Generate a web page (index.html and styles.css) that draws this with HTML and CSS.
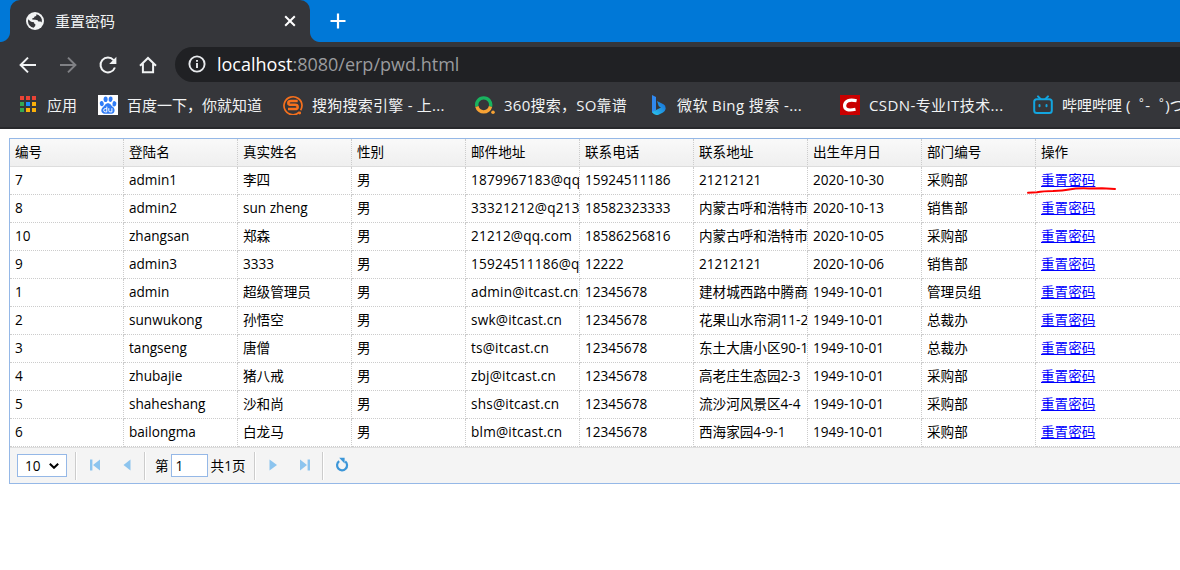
FILE: index.html
```html
<!DOCTYPE html>
<html lang="zh-CN">
<head>
	<meta charset="UTF-8">
	<title>重置密码</title>
	<link rel="stylesheet" href="styles.css">
</head>
<body>
	<div class="tabs">
		<div class="tab">
			<svg class="globe" viewBox="0 0 18 18"><circle cx="9" cy="9" r="9" fill="#f1f3f4"/><path d="M2.2 7.2 L4.4 9.2 Q5 10 6.2 10 L8 10.2 L8.2 11.6 L9.4 12.2 L9.2 14 L7.6 15.8 Q2.4 14.6 2 9.5Z M10.4 2.2 Q14.8 3.2 15.9 7.8 L15.7 10.6 L14.6 9.6 L12.4 9.6 L11.6 8.2 L9.4 7.8 L6.2 7.6 L6.4 6.2 L8 5.8 L8.6 4.4 L10.2 4Z" fill="#35363a"/></svg>
			<span class="tab_title">重置密码</span>
			<svg class="close" viewBox="0 0 12 12"><path d="M1.2 1.2L10.8 10.8M10.8 1.2L1.2 10.8"/></svg>
		</div>
		<svg class="add" viewBox="0 0 16 16"><path d="M8 .5V15.5M.5 8H15.5"/></svg>
	</div>
	<div class="toolbar">
		<svg class="nav" viewBox="0 0 20 20"><path d="M18 10H3M10 2.6L2.6 10L10 17.4"/></svg>
		<svg class="nav off" viewBox="0 0 20 20"><path d="M2 10H17M10 2.6L17.4 10L10 17.4"/></svg>
		<svg class="nav" viewBox="0 0 20 20"><path d="M16.9 12.5A7.4 7.4 0 1 1 15.6 5.2"/><path class="fill" d="M18.4 1.8V9H11.2Z"/></svg>
		<svg class="nav" viewBox="0 0 20 20"><path d="M2 10.8L10 3L18 10.8M4.9 8.8V17.2H15.1V8.8"/></svg>
		<div class="address">
			<svg class="info" viewBox="0 0 18 18"><circle cx="9" cy="9" r="7.6"/><path d="M9 8V13M9 5V6.8"/></svg>
			<span class="url"><b>localhost</b>:8080/erp/pwd.html</span>
		</div>
	</div>
	<div class="bookmarks">
		<div class="mark">
			<svg viewBox="0 0 20 20"><path fill="#ea4335" d="M2 1h4v4H2zM8 1h4v4H8zM14 1h4v4h-4z"/><path fill="#34a853" d="M2 7h4v4H2zM2 13h4v4H2z"/><path fill="#1a8cff" d="M8 7h4v4H8z"/><path fill="#fbb10a" d="M14 7h4v4h-4zM8 13h4v4H8zM14 13h4v4h-4z"/></svg>
			<span>应用</span>
		</div>
		<div class="mark">
			<svg viewBox="0 0 20 20"><path fill="#fff" d="M0 0h20v20H0z"/><g fill="#2f7cf6"><ellipse cx="3.8" cy="8.6" rx="2" ry="2.7" transform="rotate(-12 3.8 8.6)"/><ellipse cx="7.6" cy="4.2" rx="2" ry="2.8"/><ellipse cx="12.6" cy="4.2" rx="2" ry="2.8" transform="rotate(10 12.6 4.2)"/><ellipse cx="16.4" cy="8.8" rx="2" ry="2.7" transform="rotate(8 16.4 8.8)"/><path d="M10 8.3C12.6 8.3 13 10.6 15 12C17.6 14 17 18.7 13.6 18.7H6.6C2.8 18.7 2.4 14.2 5 12.1C7 10.6 7.4 8.3 10 8.3Z"/></g><path fill="none" stroke="#fff" stroke-width="1" d="M8.8 11.6V16.9H7.3Q5.7 16.9 5.7 15.2T7.3 13.6H8.8M10.8 13.2V15.6Q10.8 16.9 12 16.9H13.9V13.2"/></svg>
			<span>百度一下，你就知道</span>
		</div>
		<div class="mark wide">
			<svg viewBox="0 0 20 20"><path fill="none" stroke="#f5701d" stroke-width="1.7" d="M16.3 17.2A9 9 0 1 1 19 10.5Q18.9 13.2 17.6 15.3"/><path fill="none" stroke="#f5701d" stroke-width="2.5" d="M14.7 6H8Q5.3 6 5.3 7.9T8 9.8H12Q14.7 9.8 14.7 11.9T12 14H5"/><circle cx="16.7" cy="18" r="1.4" fill="#f5701d"/></svg>
			<span>搜狗搜索引擎 - 上...</span>
		</div>
		<div class="mark wide">
			<svg viewBox="0 0 20 20"><path fill="none" stroke="#19b35f" stroke-width="3.4" d="M1.9 11.5A7 7 0 1 1 15.5 11.5"/><path fill="none" stroke="#f8a334" stroke-width="3.4" d="M1.9 11.5A7 7 0 0 0 15.5 11.5"/><circle cx="18" cy="17.3" r="1.8" fill="#f8a334"/></svg>
			<span>360搜索，SO靠谱</span>
		</div>
		<div class="mark wider">
			<svg viewBox="0 0 20 20"><defs><linearGradient id="bing" x1="0" y1="1" x2="1" y2="0"><stop offset="0" stop-color="#2bc9ee"/><stop offset="1" stop-color="#1768d8"/></linearGradient></defs><path fill="#3088ee" d="M4 0L8 2V15L4 18Z"/><path fill="url(#bing)" d="M9 6L15.5 9.3Q18 10.8 17.6 14Q17.2 16.3 15 17.5L10 20Q6 20.5 4 17L13 12.4L10.8 11.3Z"/></svg>
			<span>微软 Bing 搜索 -...</span>
		</div>
		<div class="mark wider">
			<svg viewBox="0 0 20 20"><path fill="#c90000" d="M0 0h20v20H0z"/><path fill="none" stroke="#fff" stroke-width="3.2" d="M16.6 5.7Q5.5 3.4 4.6 10.2Q4.1 16.8 15.5 14.3"/></svg>
			<span>CSDN-专业IT技术...</span>
		</div>
		<div class="mark">
			<svg viewBox="0 0 20 20"><g fill="none" stroke="#13a5df" stroke-width="2" stroke-linecap="round"><rect x="1.2" y="4.2" width="17.6" height="13.8" rx="2.5"/><path d="M5 1.4L7.5 4M15 1.4L12.5 4M6.5 10V11.3M13.5 10V11.3"/></g></svg>
			<span>哔哩哔哩 (<i class="dot">゜</i>-<i class="dot">゜</i>)つ</span>
		</div>
	</div>

	<div class="grid">
		<table>
			<tr><th>编号</th><th>登陆名</th><th>真实姓名</th><th>性别</th><th>邮件地址</th><th>联系电话</th><th>联系地址</th><th>出生年月日</th><th>部门编号</th><th class="last">操作</th></tr>
			<tr><td>7</td><td>admin1</td><td>李四</td><td>男</td><td class="email">1879967183@qq</td><td>15924511186</td><td>21212121</td><td>2020-10-30</td><td>采购部</td><td class="last"><a href="#">重置密码</a><svg class="underline" viewBox="0 0 90 8"><path d="M1 5.8L10 5.2Q16 4 26 3.9Q36 3.5 42 2.4Q50 1 62 1.4L75 1.2L88 2"/></svg></td></tr>
			<tr><td>8</td><td>admin2</td><td>sun zheng</td><td>男</td><td class="email">33321212@q213</td><td>18582323333</td><td>内蒙古呼和浩特市</td><td>2020-10-13</td><td>销售部</td><td class="last"><a href="#">重置密码</a></td></tr>
			<tr><td>10</td><td>zhangsan</td><td>郑森</td><td>男</td><td class="email">21212@qq.com</td><td>18586256816</td><td>内蒙古呼和浩特市</td><td>2020-10-05</td><td>采购部</td><td class="last"><a href="#">重置密码</a></td></tr>
			<tr><td>9</td><td>admin3</td><td>3333</td><td>男</td><td class="email">15924511186@q</td><td>12222</td><td>21212121</td><td>2020-10-06</td><td>销售部</td><td class="last"><a href="#">重置密码</a></td></tr>
			<tr><td>1</td><td>admin</td><td>超级管理员</td><td>男</td><td class="email">admin@itcast.cn</td><td>12345678</td><td>建材城西路中腾商</td><td>1949-10-01</td><td>管理员组</td><td class="last"><a href="#">重置密码</a></td></tr>
			<tr><td>2</td><td>sunwukong</td><td>孙悟空</td><td>男</td><td class="email">swk@itcast.cn</td><td>12345678</td><td>花果山水帘洞11-2</td><td>1949-10-01</td><td>总裁办</td><td class="last"><a href="#">重置密码</a></td></tr>
			<tr><td>3</td><td>tangseng</td><td>唐僧</td><td>男</td><td class="email">ts@itcast.cn</td><td>12345678</td><td>东土大唐小区90-1</td><td>1949-10-01</td><td>总裁办</td><td class="last"><a href="#">重置密码</a></td></tr>
			<tr><td>4</td><td>zhubajie</td><td>猪八戒</td><td>男</td><td class="email">zbj@itcast.cn</td><td>12345678</td><td>高老庄生态园2-3</td><td>1949-10-01</td><td>采购部</td><td class="last"><a href="#">重置密码</a></td></tr>
			<tr><td>5</td><td>shaheshang</td><td>沙和尚</td><td>男</td><td class="email">shs@itcast.cn</td><td>12345678</td><td>流沙河风景区4-4</td><td>1949-10-01</td><td>采购部</td><td class="last"><a href="#">重置密码</a></td></tr>
			<tr><td>6</td><td>bailongma</td><td>白龙马</td><td>男</td><td class="email">blm@itcast.cn</td><td>12345678</td><td>西海家园4-9-1</td><td>1949-10-01</td><td>采购部</td><td class="last"><a href="#">重置密码</a></td></tr>
		</table>
		<div class="pager">
			<div class="size"><span>10</span><svg viewBox="0 0 10 6"><path d="M.8 .8L5 4.8L9.2 .8"/></svg></div>
			<i class="line far"></i>
			<svg class="btn" viewBox="0 0 16 16"><path d="M3 2.5h2.4v11H3zM13 2.5v11L6 8z"/></svg>
			<svg class="btn" viewBox="0 0 16 16"><path d="M11.5 2.5v11L4.5 8z"/></svg>
			<i class="line"></i>
			<span class="page">第</span>
			<input class="num" type="text" value="1">
			<span class="total">共1页</span>
			<i class="line"></i>
			<svg class="btn" viewBox="0 0 16 16"><path d="M4.5 2.5v11L12 8z"/></svg>
			<svg class="btn" viewBox="0 0 16 16"><path d="M3 2.5v11L10 8zM10.6 2.5H13v11h-2.4z"/></svg>
			<i class="line far"></i>
			<svg class="btn load" viewBox="0 0 16 16"><path class="ring" d="M11.2 4.4A5 5 0 1 1 5.2 4.2"/><path class="tip" d="M5.2 .8H10.6V6.4L8.4 4.2Z"/></svg>
		</div>
	</div>
</body>
</html>
```
FILE: styles.css
```css
*{
	margin: 0;
	padding: 0;
	box-sizing: border-box;
}
body{
	height: 570px;
	overflow: hidden;
	background: #fff;
	font-family: "Open Sans","Noto Sans CJK SC",sans-serif;
	font-size: 13.6px;
	color: #000;
}
svg{
	display: block;
	flex: none;
}
/* 浏览器标签 */
.tabs{
	display: flex;
	height: 42px;
	padding-left: 10px;
	background: #0078d7;
}
.tab{
	position: relative;
	display: flex;
	align-items: center;
	width: 300px;
	padding: 0 14px 0 16px;
	border-radius: 10px 10px 0 0;
	background: #35363a;
	color: #f1f3f4;
	font-size: 15px;
}
.tab::before,
.tab::after{
	content: "";
	position: absolute;
	bottom: 0;
	width: 10px;
	height: 10px;
}
.tab::before{
	left: -10px;
	background: radial-gradient(circle at 0 0,#0078d7 9.5px,#35363a 10.5px);
}
.tab::after{
	right: -10px;
	background: radial-gradient(circle at 100% 0,#0078d7 9.5px,#35363a 10.5px);
}
.globe{
	width: 18px;
	height: 18px;
}
.tab_title{
	flex: 1;
	margin-left: 11px;
	padding-bottom: 2px;
}
.close{
	width: 12px;
	height: 12px;
	fill: none;
	stroke: #fff;
	stroke-width: 2;
}
.add{
	width: 16px;
	height: 16px;
	margin: 13px 0 0 20px;
	fill: none;
	stroke: #fff;
	stroke-width: 2.2;
}
/* 地址栏 */
.toolbar{
	display: flex;
	align-items: center;
	gap: 20px;
	height: 44px;
	padding-left: 18px;
	background: #35363a;
}
.nav{
	width: 20px;
	height: 20px;
	margin-top: 1px;
	fill: none;
	stroke: #f1f3f4;
	stroke-width: 2;
}
.nav .fill{
	fill: #f1f3f4;
	stroke: none;
}
.off{
	stroke: #808185;
}
.address{
	display: flex;
	align-items: center;
	flex: 1;
	height: 35px;
	margin-left: -3px;
	padding-left: 13px;
	border-radius: 18px 0 0 18px;
	background: #202124;
}
.info{
	width: 18px;
	height: 18px;
	fill: none;
	stroke: #e8eaed;
	stroke-width: 1.9;
}
.url{
	margin-left: 11px;
	font-size: 18px;
	color: #9a9b9e;
}
.url b{
	font-weight: normal;
	color: #fff;
}
/* 书签栏 */
.bookmarks{
	display: grid;
	grid-template-columns: 80px 185px 192px 173px 192px 193px 147px;
	height: 43px;
	padding-left: 18px;
	border-bottom: 2px solid #28292c;
	background: #35363a;
	color: #f1f3f4;
	font-size: 15px;
}
.mark{
	display: flex;
	align-items: center;
	gap: 10px;
	height: 38px;
	white-space: nowrap;
	overflow: hidden;
}
.mark svg{
	width: 20px;
	height: 20px;
}
.mark span{
	margin-left: -1px;
	padding-bottom: 2px;
}
.wide{
	letter-spacing: .25px;
}
.wider{
	letter-spacing: .4px;
}
.dot{
	margin-right: -9px;
	padding-left: 9px;
	font-style: normal;
}
/* 数据表格 */
.grid{
	margin: 9px 0 0 9px;
	border: 1px solid #95b8e7;
	border-right: 0;
}
table{
	width: 100%;
	table-layout: fixed;
	border-collapse: separate;
	border-spacing: 0;
}
th,td{
	width: 114px;
	height: 28px;
	padding: 0 0 2px 5px;
	border-right: 1px dotted #ccc;
	border-bottom: 1px dotted #ccc;
	font-weight: normal;
	line-height: 24px;
	text-align: left;
	white-space: nowrap;
	overflow: hidden;
}
th{
	border-bottom: 1px solid #ddd;
	background: linear-gradient(to bottom,#f9f9f9,#efefef);
}
.email{
	letter-spacing: .2px;
}
.last{
	position: relative;
	width: auto;
	border-right: 0;
	overflow: visible;
}
a{
	color: #00f;
}
.underline{
	position: absolute;
	left: -9px;
	top: 20px;
	width: 90px;
	height: 8px;
	z-index: 1;
	fill: none;
	stroke: #f00;
	stroke-width: 2;
	stroke-linecap: round;
}
/* 分页 */
.pager{
	display: flex;
	align-items: center;
	height: 36px;
	padding-left: 7px;
	border-top: 1px solid #ddd;
	background: #f4f4f4;
}
.size{
	display: flex;
	align-items: center;
	justify-content: space-between;
	width: 50px;
	height: 23px;
	padding: 0 7px;
	border: 1px solid #95b8e7;
	background: #fff;
}
.size svg{
	width: 10px;
	height: 6px;
	fill: none;
	stroke: #000;
	stroke-width: 2;
}
.line{
	width: 2px;
	height: 28px;
	margin: 0 9px 0 8px;
	border-left: 1px solid #ccc;
	border-right: 1px solid #fff;
}
.far{
	margin-right: 10px;
}
.btn{
	width: 16px;
	height: 16px;
	margin: -2px 16px 0 0;
	fill: #8cc4ee;
}
.btn + .line{
	margin-left: -7px;
}
.page{
	margin-right: 2px;
	padding-bottom: 2px;
}
.num{
	width: 37px;
	height: 23px;
	padding-left: 4px;
	border: 1px solid #95b8e7;
	font: inherit;
}
.total{
	margin-left: 3px;
	padding-bottom: 2px;
}
.ring{
	fill: none;
	stroke: #3c96d8;
	stroke-width: 2.2;
}
.tip{
	fill: #3c96d8;
}
```
